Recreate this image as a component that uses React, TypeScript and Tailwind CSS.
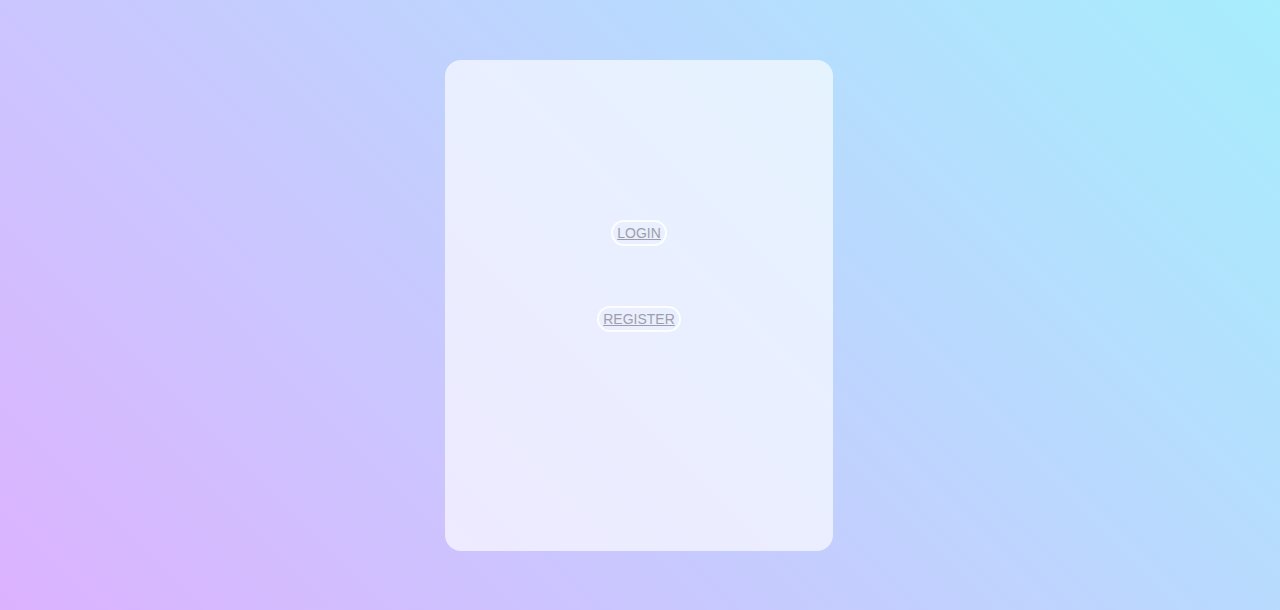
import React from "react";

export default function App() {
  return (
    <div
      className="w-full h-[610px] flex justify-center bg-[linear-gradient(45deg,#dcb2ff_0%,#a7eefd_100%)]"
      style={{ fontFamily: '"Liberation Sans", Arial, sans-serif' }}
    >
      <div className="mt-[60px] mr-[2px] w-[388px] h-[491px] rounded-2xl bg-white/65 flex flex-col items-center pt-[160px] gap-[60px]">
        <a
          href="#"
          className="h-[26px] px-[4px] flex items-center rounded-full border-2 border-white/90 text-[14px] text-[#9e9eaa] underline"
        >
          LOGIN
        </a>
        <a
          href="#"
          className="h-[26px] px-[4px] flex items-center rounded-full border-2 border-white/90 text-[14px] text-[#9e9eaa] underline"
        >
          REGISTER
        </a>
      </div>
    </div>
  );
}
